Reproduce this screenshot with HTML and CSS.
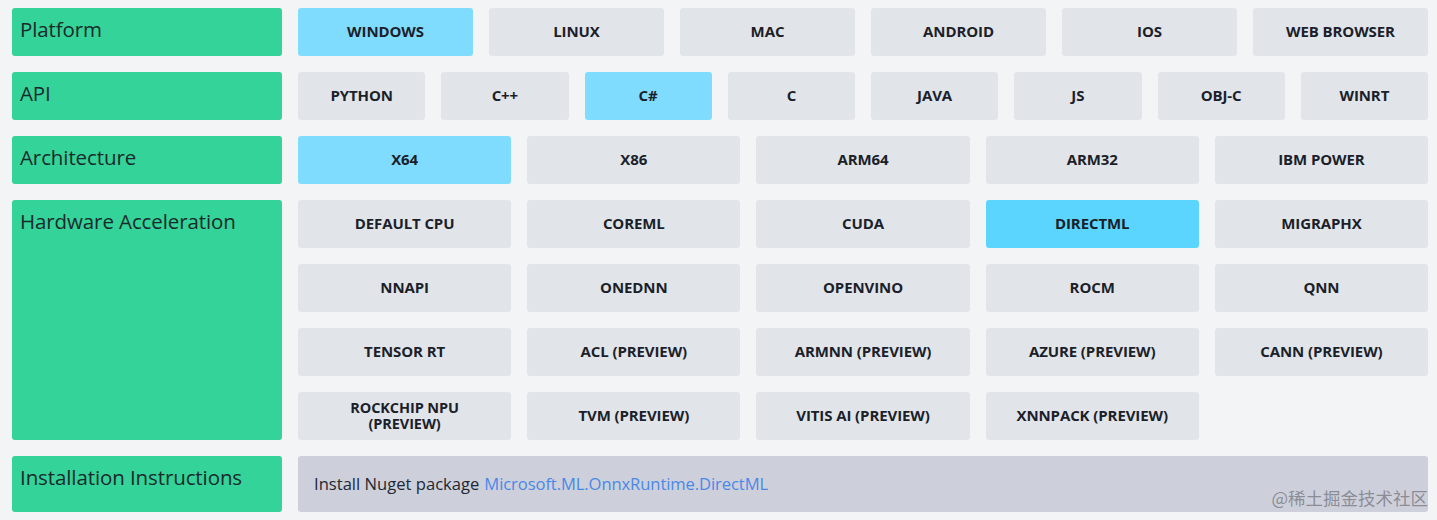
FILE: index.html
```html
<!DOCTYPE html>
<html>
<head>
<meta charset="utf-8">
<link rel="stylesheet" href="styles.css">
</head>
<body>
<div class="table">
  <div class="label">Platform</div>
  <div class="opts cols6">
    <div class="btn sel">WINDOWS</div>
    <div class="btn">LINUX</div>
    <div class="btn">MAC</div>
    <div class="btn">ANDROID</div>
    <div class="btn">IOS</div>
    <div class="btn">WEB BROWSER</div>
  </div>

  <div class="label">API</div>
  <div class="opts cols8">
    <div class="btn">PYTHON</div>
    <div class="btn">C++</div>
    <div class="btn sel">C#</div>
    <div class="btn">C</div>
    <div class="btn">JAVA</div>
    <div class="btn">JS</div>
    <div class="btn">OBJ-C</div>
    <div class="btn">WINRT</div>
  </div>

  <div class="label">Architecture</div>
  <div class="opts cols5">
    <div class="btn sel">X64</div>
    <div class="btn">X86</div>
    <div class="btn">ARM64</div>
    <div class="btn">ARM32</div>
    <div class="btn">IBM POWER</div>
  </div>

  <div class="label">Hardware Acceleration</div>
  <div class="opts cols5">
    <div class="btn">DEFAULT CPU</div>
    <div class="btn">COREML</div>
    <div class="btn">CUDA</div>
    <div class="btn sel2">DIRECTML</div>
    <div class="btn">MIGRAPHX</div>
    <div class="btn">NNAPI</div>
    <div class="btn">ONEDNN</div>
    <div class="btn">OPENVINO</div>
    <div class="btn">ROCM</div>
    <div class="btn">QNN</div>
    <div class="btn">TENSOR RT</div>
    <div class="btn">ACL (PREVIEW)</div>
    <div class="btn">ARMNN (PREVIEW)</div>
    <div class="btn">AZURE (PREVIEW)</div>
    <div class="btn">CANN (PREVIEW)</div>
    <div class="btn tight">ROCKCHIP NPU<br>(PREVIEW)</div>
    <div class="btn">TVM (PREVIEW)</div>
    <div class="btn">VITIS AI (PREVIEW)</div>
    <div class="btn">XNNPACK (PREVIEW)</div>
  </div>

  <div class="label">Installation Instructions</div>
  <div class="install">Install Nuget package <a class="link" href="#">Microsoft.ML.OnnxRuntime.DirectML</a></div>
</div>
<div class="watermark">@稀土掘金技术社区</div>
</body>
</html>
```

FILE: styles.css
```css
html, body {
  margin: 0;
  padding: 0;
  background: #f3f4f6;
}
body {
  padding: 8px 9px 0 12px;
  font-family: "Open Sans", "Noto Sans", sans-serif;
  color: #1f2937;
  position: relative;
  height: 512px;
  box-sizing: border-box;
  overflow: hidden;
}
.table {
  display: grid;
  grid-template-columns: 270px 1130px;
  column-gap: 16px;
  row-gap: 16px;
}
.label {
  background: #34d399;
  border-radius: 3px;
  font-size: 20.5px;
  line-height: 28px;
  padding: 7px 8px;
  color: #1a2a2a;
  letter-spacing: -0.1px;
}
.opts {
  display: grid;
  gap: 16px;
  grid-auto-rows: 48px;
}
.cols6 { grid-template-columns: repeat(6, 1fr); }
.cols8 { grid-template-columns: repeat(8, 1fr); }
.cols5 { grid-template-columns: repeat(5, 1fr); }
.btn {
  background: #e1e4e8;
  border-radius: 3px;
  display: flex;
  align-items: center;
  justify-content: center;
  text-align: center;
  font-weight: 700;
  font-size: 15px;
  color: #1b1f2a;
  letter-spacing: -0.1px;
  padding-bottom: 2px;
  box-sizing: border-box;
}
.btn.sel { background: #80dcff; }
.btn.sel2 { background: #5cd5fe; }
.btn.tight { line-height: 16px; font-size: 14.5px; padding-bottom: 1px; }
.install {
  background: #cdd0da;
  border-radius: 3px;
  height: 56px;
  display: flex;
  align-items: center;
  padding: 0 16px 1px;
  box-sizing: border-box;
  font-size: 16.6px;
  color: #222833;
}
.link {
  color: #4a88e8;
  text-decoration: none;
  margin-left: 5px;
  letter-spacing: -0.1px;
}
.watermark {
  position: absolute;
  right: 9px;
  bottom: 3px;
  font-family: "Noto Sans CJK SC", sans-serif;
  font-size: 17.5px;
  color: rgba(110, 110, 120, 0.7);
  line-height: 22px;
}
```
